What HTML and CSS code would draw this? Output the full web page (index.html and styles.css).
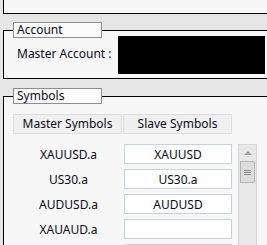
FILE: index.html
```html
<!DOCTYPE html>
<html lang="en">
<head>
    <meta charset="UTF-8">
    <title>Copier Settings</title>
    <link rel="stylesheet" href="styles.css">
</head>
<body>
    <div class="window">
        <!-- previous group, only its bottom is visible -->
        <div class="group-top"></div>

        <fieldset class="group account">
            <legend>Account</legend>
            <div class="account-row">
                <span class="account-label">Master Account :</span>
                <div class="account-value"></div>
            </div>
        </fieldset>

        <fieldset class="group symbols">
            <legend>Symbols</legend>
            <div class="symbol-head">
                <div class="head-btn">Master Symbols</div>
                <div class="head-btn">Slave Symbols</div>
            </div>
            <div class="symbol-body">
                <div class="symbol-list">
                    <div class="symbol-row"><span class="master">XAUUSD.a</span><input class="slave" value="XAUUSD"></div>
                    <div class="symbol-row"><span class="master">US30.a</span><input class="slave" value="US30.a"></div>
                    <div class="symbol-row"><span class="master">AUDUSD.a</span><input class="slave" value="AUDUSD"></div>
                    <div class="symbol-row"><span class="master">XAUAUD.a</span><input class="slave" value=""></div>
                    <div class="symbol-row"><span class="master"></span><input class="slave" value=""></div>
                </div>
                <div class="scrollbar">
                    <div class="arrow-up"></div>
                    <div class="thumb"><span></span><span></span><span></span></div>
                </div>
            </div>
        </fieldset>
    </div>
</body>
</html>
```

FILE: styles.css
```css
/* Form layout */
body {
    margin: 0;
    background: #e6e6e6;
    font-family: "Noto Sans", sans-serif;
    font-size: 12px;
    color: #0a0a1a;
}
.window {
    width: 267px;
    height: 245px;
    overflow: hidden;
}
.group-top {
    width: 300px;
    margin-left: 3px;
    height: 13px;
    border-left: 1px solid #000;
    border-bottom: 1px solid #000;
    background: #f7f7f7;
}
.group {
    width: 290px;
    margin: 0 0 0 3px;
    padding: 0 0 0 9px;
    border: 1px solid #000;
    background: #f7f7f7;
}
.group legend {
    box-sizing: border-box;
    width: 89px;
    height: 16px;
    padding: 0 0 0 3px;
    border: 1px solid #8c8c8c;
    background: #fbfbfb;
    line-height: 14px;
}
.account {
    margin-top: 8px;
    padding-bottom: 4px;
}
.account-row {
    display: flex;
    align-items: center;
    margin-top: -2px;
}
.account-label {
    width: 101px;
    padding-left: 4px;
    margin-top: -3px;
}
.account-value {
    width: 147px;
    height: 38px;
    background: #000;
}
.symbols {
    margin-top: 9px;
}
.symbol-head {
    display: flex;
    gap: 1px;
    margin-top: 10px;
}
.head-btn {
    box-sizing: border-box;
    width: 109px;
    height: 20px;
    border: 1px solid #dcdcdc;
    background: #f0f0f0;
    text-align: center;
    line-height: 18px;
}
.symbol-body {
    display: flex;
    margin-top: 10px;
}
.symbol-list {
    display: flex;
    flex-direction: column;
    gap: 5px;
}
.symbol-row {
    display: flex;
    align-items: center;
    height: 20px;
}
.master {
    width: 111px;
    text-align: center;
}
.slave {
    box-sizing: border-box;
    width: 108px;
    height: 20px;
    margin: 0;
    padding: 0;
    border: 1px solid #c5d2dc;
    background: #fff;
    font: inherit;
    color: inherit;
    text-align: center;
}
.scrollbar {
    box-sizing: border-box;
    width: 19px;
    height: 110px;
    margin-left: 6px;
    border: 1px solid #d4d4d4;
    background: #e8e8e8;
}
.arrow-up {
    height: 16px;
    position: relative;
}
.arrow-up::after {
    content: "";
    position: absolute;
    left: 5px;
    top: 6px;
    border-left: 4px solid transparent;
    border-right: 4px solid transparent;
    border-bottom: 4px solid #a0a0a0;
}
.thumb {
    box-sizing: border-box;
    height: 22px;
    margin: 0 1px;
    border: 1px solid #b4b4b4;
    background: #dcdcdc;
    display: flex;
    flex-direction: column;
    justify-content: center;
    align-items: center;
    gap: 1px;
}
.thumb span {
    width: 7px;
    height: 1px;
    background: #8a8a8a;
}
```
